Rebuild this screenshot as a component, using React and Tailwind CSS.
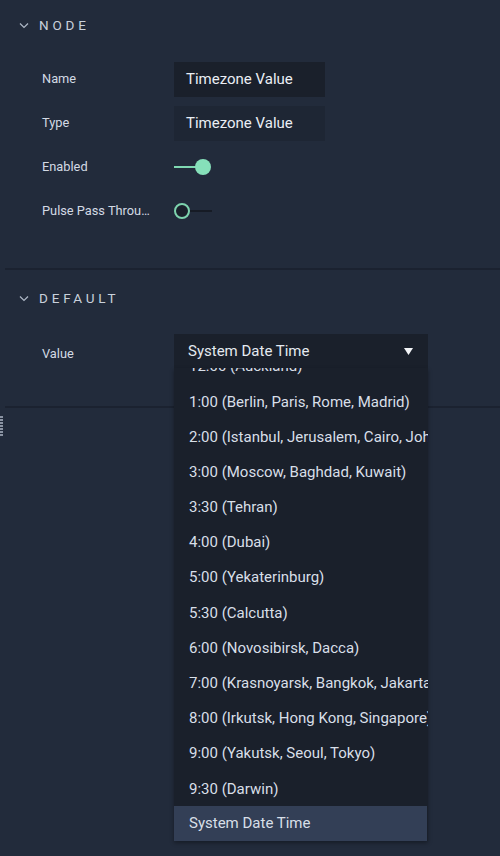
import React from 'react';

const zones = [
  '12:00 (Auckland)',
  '1:00 (Berlin, Paris, Rome, Madrid)',
  '2:00 (Istanbul, Jerusalem, Cairo, Johannesburg)',
  '3:00 (Moscow, Baghdad, Kuwait)',
  '3:30 (Tehran)',
  '4:00 (Dubai)',
  '5:00 (Yekaterinburg)',
  '5:30 (Calcutta)',
  '6:00 (Novosibirsk, Dacca)',
  '7:00 (Krasnoyarsk, Bangkok, Jakarta)',
  '8:00 (Irkutsk, Hong Kong, Singapore)',
  '9:00 (Yakutsk, Seoul, Tokyo)',
  '9:30 (Darwin)',
];

const Chevron = () => (
  <svg width="10" height="7" viewBox="0 0 10 7" className="shrink-0">
    <path d="M1 1.5 L5 5.5 L9 1.5" fill="none" stroke="#aeb8c6" strokeWidth="1.2" />
  </svg>
);

const SectionHeader = ({ title, h }) => (
  <div className={`flex items-center gap-[10px] pl-[19px] ${h}`}>
    <Chevron />
    <span className="text-[13.5px] tracking-[3.8px] text-[#c9d1dc]">{title}</span>
  </div>
);

const Row = ({ label, children }) => (
  <div className="flex items-center h-[44px]">
    <div className="w-[174px] pl-[42px] pr-[19px] text-[12.8px] text-[#d3dae4] truncate">{label}</div>
    {children}
  </div>
);

const App = () => {
  return (
    <div className="w-[500px] h-[856px] bg-[#222b3b] overflow-hidden" style={{ fontFamily: 'Roboto, "Liberation Sans", sans-serif' }}>
      <SectionHeader title="NODE" h="h-[50px]" />
      <div className="pt-[7px]">
        <Row label="Name">
          <div className="w-[151px] h-[35px] bg-[#1a202b] flex items-center pl-[12px] text-[15px] text-[#eaeef4]">Timezone Value</div>
        </Row>
        <Row label="Type">
          <div className="w-[151px] h-[35px] bg-[#1e2634] flex items-center pl-[12px] text-[15px] text-[#eaeef4]">Timezone Value</div>
        </Row>
        <Row label="Enabled">
          <div className="flex items-center">
            <div className="w-[22px] h-[2px] bg-[#7fd9b2]" />
            <div className="w-[16px] h-[16px] rounded-full bg-[#86e0ba] -ml-px" />
          </div>
        </Row>
        <Row label="Pulse Pass Through">
          <div className="flex items-center">
            <div className="w-[16px] h-[16px] rounded-full border-2 border-[#7dd3ae] bg-[#1a202b]" />
            <div className="w-[22px] h-[2px] bg-[#161b25]" />
          </div>
        </Row>
      </div>
      <div className="mt-[35px] ml-[5px] h-[2px] bg-[#1b2230]" />
      <SectionHeader title="DEFAULT" h="h-[56px]" />
      <div className="flex items-start h-[80px] pt-[8px]">
        <div className="w-[174px] pl-[42px] pt-[10px] text-[12.8px] text-[#d3dae4]">Value</div>
        <div className="relative w-[254px] z-10">
          <div className="h-[34px] bg-[#1a202b] flex items-center justify-between pl-[14px] pr-[15px] text-[15px] text-[#e4e9f0]">
            <span>System Date Time</span>
            <svg width="9" height="7" viewBox="0 0 9 7"><path d="M0 0 H9 L4.5 7 Z" fill="#f2f4f7" /></svg>
          </div>
          <div className="absolute left-0 top-full w-[254px] bg-[#1a202b] shadow-[0_2px_4px_rgba(0,0,0,0.35)]">
            <div className="h-[438px] overflow-hidden">
              <div className="-mt-[19px]">
                {zones.map((z) => (
                  <div key={z} className="h-[35.2px] flex items-center pl-[15px] text-[15px] text-[#d8dfe8] whitespace-nowrap overflow-hidden">{z}</div>
                ))}
              </div>
            </div>
            <div className="h-[35px] bg-[#333f56] flex items-center pl-[15px] text-[15px] text-[#d8dfe8] mr-px">System Date Time</div>
          </div>
        </div>
      </div>
      <div className="ml-[5px] h-[2px] bg-[#1b2230]" />
      <div className="mt-[8px] w-[3px] flex flex-col gap-[1px]">
        {[0, 1, 2, 3, 4, 5, 6].map((i) => (
          <div key={i} className="h-[2px] bg-[#8a93a2]" />
        ))}
      </div>
    </div>
  );
};

export default App;
